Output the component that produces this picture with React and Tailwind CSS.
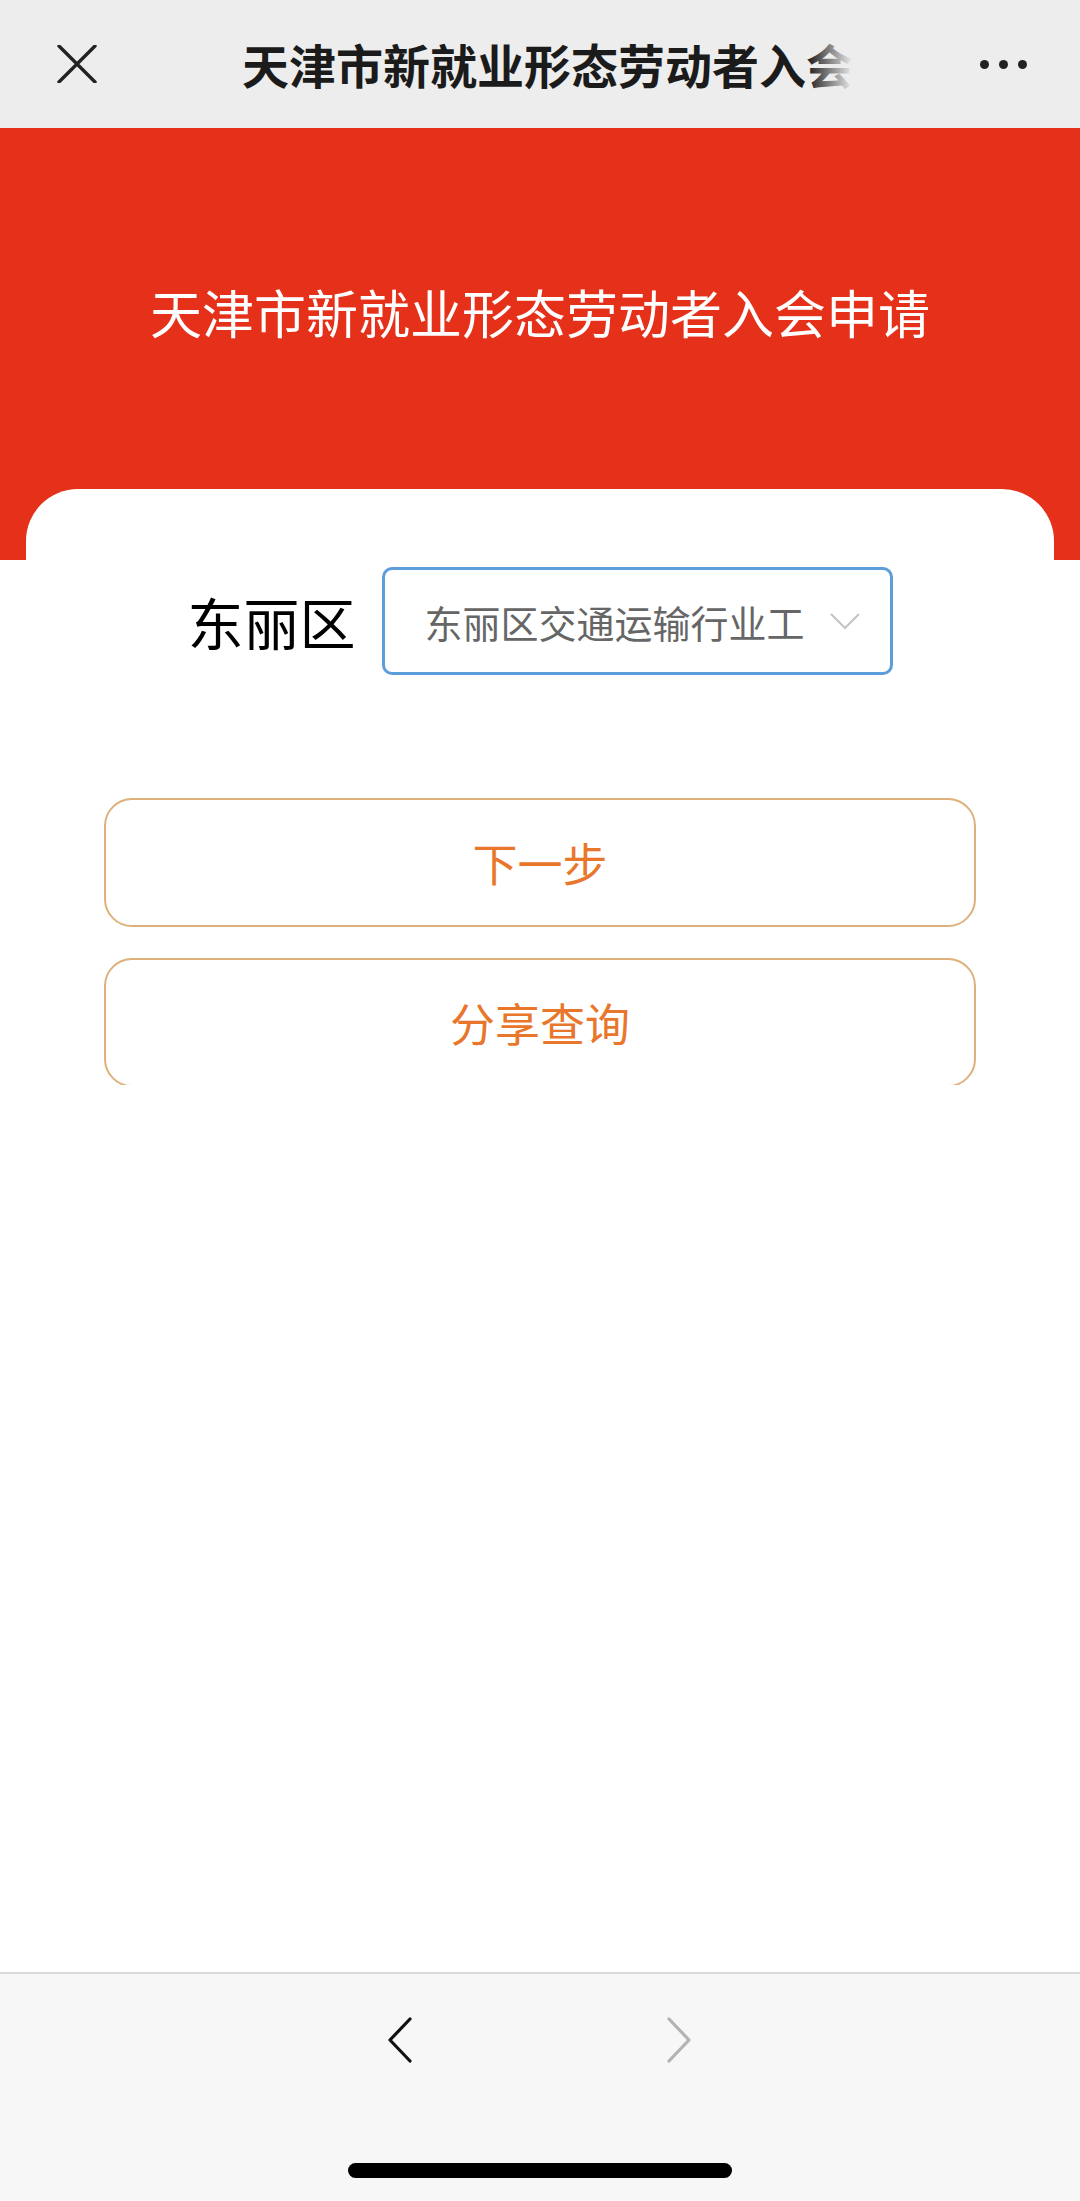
import { useState } from "react";

const font = { fontFamily: '"Noto Sans CJK SC", "Noto Sans", sans-serif' };

function CloseIcon() {
  return (
    <svg width="40" height="38" viewBox="0 0 40 38" fill="none">
      <path d="M2 1 L38 37 M38 1 L2 37" stroke="#222" strokeWidth="3.4" strokeLinecap="round" />
    </svg>
  );
}

function MoreIcon() {
  return (
    <div className="flex items-center gap-[10px]">
      <span className="w-[9px] h-[9px] rounded-full bg-[#222]" />
      <span className="w-[9px] h-[9px] rounded-full bg-[#222]" />
      <span className="w-[9px] h-[9px] rounded-full bg-[#222]" />
    </div>
  );
}

function Chevron({ dir, color }) {
  const d = dir === "left" ? "M23 2 L3 23 L23 44" : "M3 2 L23 23 L3 44";
  return (
    <svg width="26" height="46" viewBox="0 0 26 46" fill="none">
      <path d={d} stroke={color} strokeWidth="3.2" strokeLinecap="round" strokeLinejoin="round" />
    </svg>
  );
}

export default function App() {
  // only the visible part of the branch name fits in the box
  const [branch] = useState("东丽区交通运输行业工");

  return (
    <div className="w-[1080px] h-[2201px] flex flex-col bg-white overflow-hidden" style={font}>
      {/* top nav */}
      <div className="h-[128px] bg-[#ededed] flex items-center pl-[57px] pr-[53px] shrink-0">
        <CloseIcon />
        <div className="flex-1 flex justify-center pl-[18px]">
          <div className="relative">
            <span className="text-[47px] font-bold text-[#1b1b1b] leading-none whitespace-nowrap">
              天津市新就业形态劳动者入会
            </span>
            <span className="absolute right-0 top-0 h-full w-[46px] bg-linear-to-r from-[#ededed00] to-[#ededed]" />
          </div>
        </div>
        <MoreIcon />
      </div>

      {/* red banner */}
      <div className="h-[432px] bg-[#e5301a] shrink-0 flex justify-center pt-[148px]">
        <h1 className="text-[52px] text-white leading-[72px] font-normal">
          天津市新就业形态劳动者入会申请
        </h1>
      </div>

      {/* content */}
      <div className="flex-1">
        <div className="-mt-[71px] mx-[26px] bg-white rounded-t-[52px] pt-[78px]">
          <div className="flex items-center justify-center gap-[26px]">
            <span className="text-[56px] text-black leading-none">东丽区</span>
            <div className="w-[511px] h-[108px] border-[3px] border-[#5c9ddb] rounded-[10px] flex items-center pl-[40px] pr-[30px]">
              <span className="text-[38px] text-[#666] whitespace-nowrap">{branch}</span>
              <svg className="ml-auto" width="30" height="17" viewBox="0 0 30 17" fill="none">
                <path d="M1 1 L15 15 L29 1" stroke="#c4c4c4" strokeWidth="2" />
              </svg>
            </div>
          </div>

          <div className="mt-[123px] mx-[78px] h-[287px] overflow-hidden flex flex-col gap-[31px]">
            <button className="h-[129px] shrink-0 border-2 border-[#deb07c] rounded-[28px] text-[45px] text-[#e8772b] bg-white">
              下一步
            </button>
            <button className="h-[129px] shrink-0 border-2 border-[#deb07c] rounded-[28px] text-[45px] text-[#e8772b] bg-white">
              分享查询
            </button>
          </div>
        </div>
      </div>

      {/* bottom toolbar */}
      <div className="h-[229px] shrink-0 bg-[#f7f7f7] border-t-2 border-[#d9d9d9] flex flex-col items-center">
        <div className="flex items-center gap-[253px] mt-[43px] ml-[-2px]">
          <Chevron dir="left" color="#111" />
          <Chevron dir="right" color="#b3b3b3" />
        </div>
        <div className="mt-[100px] w-[384px] h-[15px] rounded-full bg-black" />
      </div>
    </div>
  );
}
